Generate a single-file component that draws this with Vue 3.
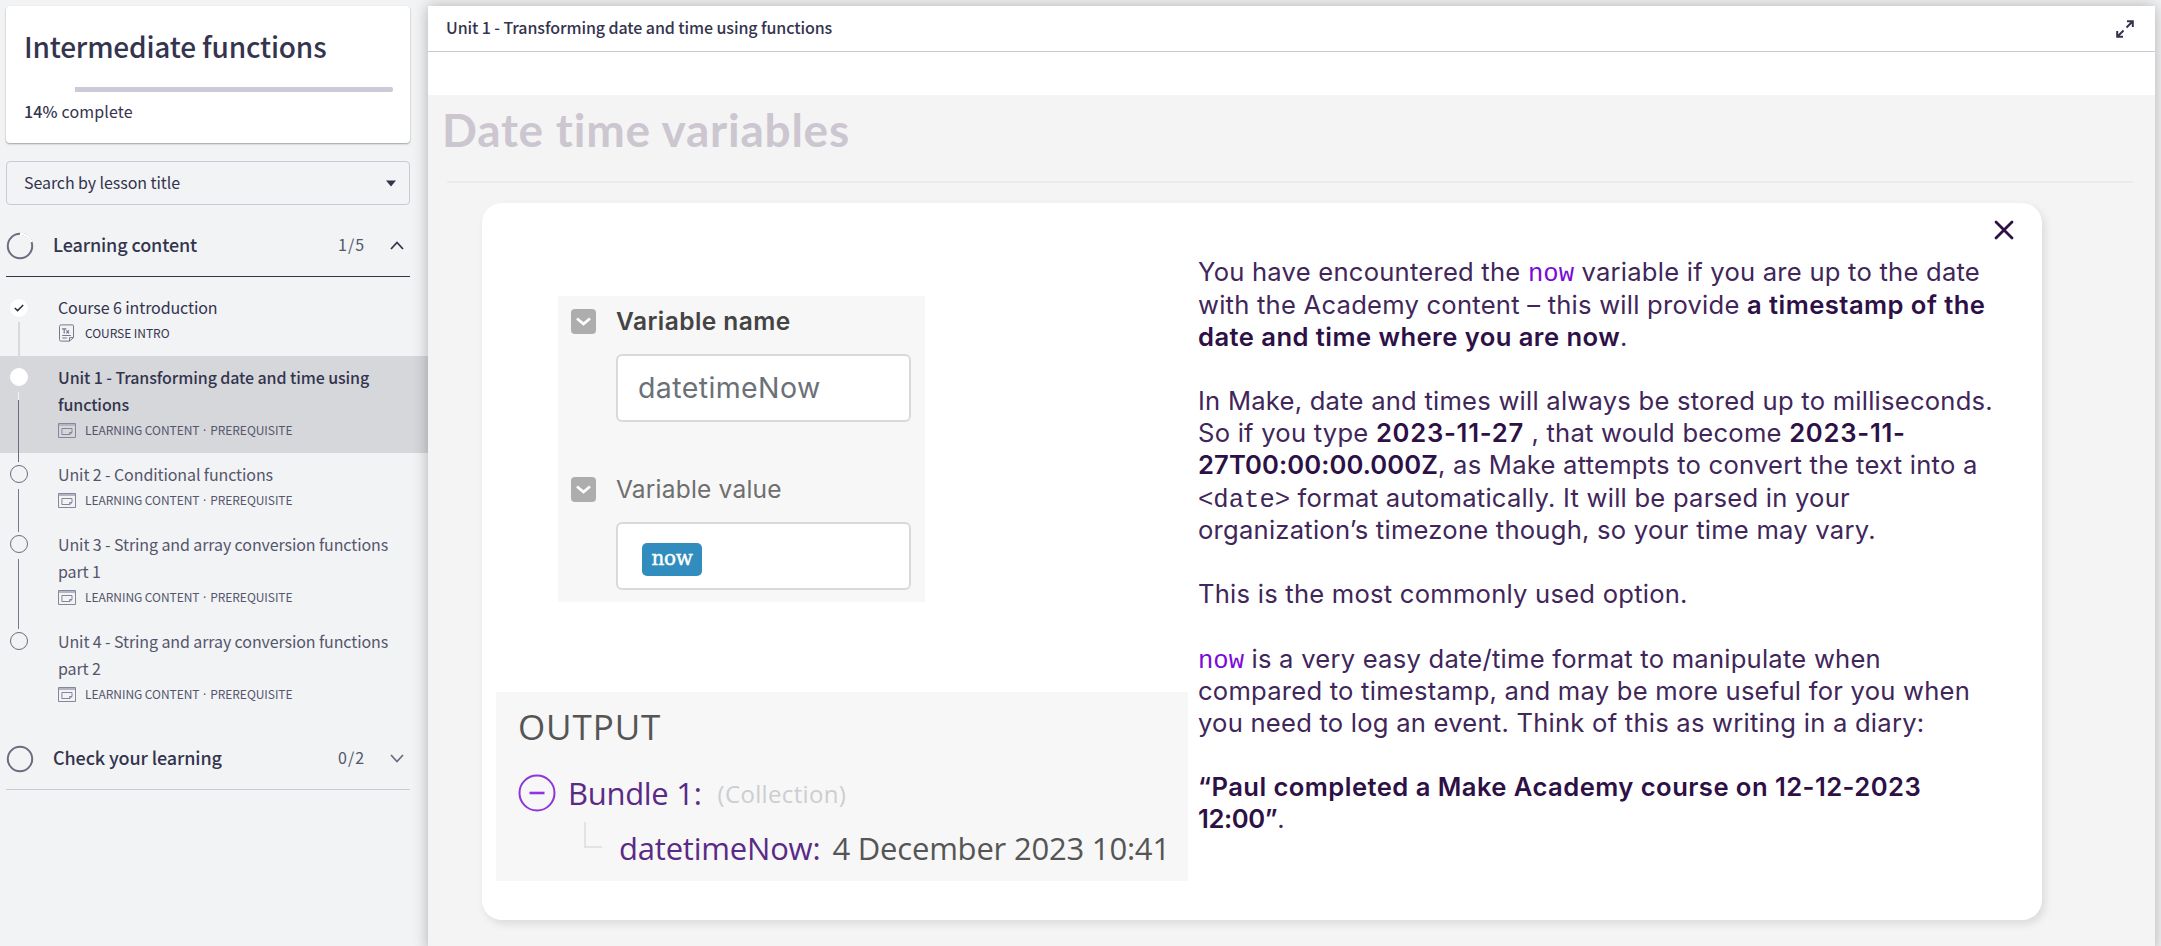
<script setup>
const units = [
  { lines: ['Course 6 introduction'], meta: ['COURSE INTRO'], state: 'done', icon: 'doc' },
  { lines: ['Unit 1 - Transforming date and time using', 'functions'], meta: ['LEARNING CONTENT', 'PREREQUISITE'], state: 'current', icon: 'win' },
  { lines: ['Unit 2 - Conditional functions'], meta: ['LEARNING CONTENT', 'PREREQUISITE'], state: 'todo', icon: 'win' },
  { lines: ['Unit 3 - String and array conversion functions', 'part 1'], meta: ['LEARNING CONTENT', 'PREREQUISITE'], state: 'todo', icon: 'win' },
  { lines: ['Unit 4 - String and array conversion functions', 'part 2'], meta: ['LEARNING CONTENT', 'PREREQUISITE'], state: 'todo', icon: 'win' },
]
</script>

<template>
  <div class="page">
    <aside class="side">
      <section class="progress-card">
        <h1>Intermediate functions</h1>
        <div class="bar"><i></i></div>
        <p><b>14%</b> complete</p>
      </section>
      <div class="select">
        <span>Search by lesson title</span>
        <svg width="10" height="7" viewBox="0 0 10 7"><path d="M0 0.5H10L5 6.5Z" fill="#34344e" /></svg>
      </div>
      <div class="section open">
        <svg class="ring" width="28" height="28" viewBox="0 0 28 28">
          <circle cx="14" cy="14" r="12.2" fill="none" stroke="#6b6c80" stroke-width="2" />
          <path d="M14 1.8A12.2 12.2 0 0 1 25.6 10.2" fill="none" stroke="#fff" stroke-width="2.4" />
        </svg>
        <h2>Learning content</h2>
        <em>1/5</em>
        <svg width="14" height="9" viewBox="0 0 14 9"><path d="M1 8L7 1.5L13 8" fill="none" stroke="#34344e" stroke-width="1.8" /></svg>
      </div>
      <ul>
        <li v-for="(u, i) in units" :key="i" :class="u.state">
          <div class="mark">
            <span class="dot"><svg v-if="u.state === 'done'" width="10" height="8" viewBox="0 0 10 8"><path d="M0.8 4L3.6 6.6L9.2 1" fill="none" stroke="#2b2b3d" stroke-width="1.5" /></svg></span>
            <span v-if="i < units.length - 1" class="line"></span>
          </div>
          <div class="info">
            <div v-for="l in u.lines" :key="l" class="ttl">{{ l }}</div>
            <div class="meta">
              <svg v-if="u.icon === 'doc'" width="18" height="18" viewBox="0 0 18 18" fill="none" stroke="#77788b"><path d="M3.2 0.9H14.4Q15.5 0.9 15.5 2V13.6L11.5 17.1H3.2Q1.5 17.1 1.5 15.5V2.4Q1.5 0.9 3.2 0.9ZM11.5 17V13.6H15.4M4.2 11.5H12.8M4.2 14H9" /><path d="M4 4.8H8.4M6.2 4.8V9.4M8.4 6.4L11 9.4M11 6.4L8.4 9.4" stroke-width="1.2" /></svg>
              <svg v-else width="18" height="15" viewBox="0 0 18 15" fill="none" stroke="#85869a"><path d="M0.5 0.5H17.5V14.5H0.5Z" /><path d="M1 2H17" stroke="#b4b5c2" stroke-width="2" /><path d="M3.9 5.5H14V9.6L11.8 11.5H3.9ZM11.6 11.4V9.5H14" /></svg>
              <span>{{ u.meta[0] }}<template v-if="u.meta[1]"><span class="sep"> · </span>{{ u.meta[1] }}</template></span>
            </div>
          </div>
        </li>
      </ul>
      <div class="section closed">
        <svg class="ring" width="28" height="28" viewBox="0 0 28 28"><circle cx="14" cy="14" r="12.2" fill="none" stroke="#6b6c80" stroke-width="2" /></svg>
        <h2>Check your learning</h2>
        <em>0/2</em>
        <svg width="14" height="9" viewBox="0 0 14 9"><path d="M1 1L7 7.5L13 1" fill="none" stroke="#6b6c80" stroke-width="1.8" /></svg>
      </div>
    </aside>

    <main>
      <header>
        <span>Unit 1 - Transforming date and time using functions</span>
        <svg width="18" height="18" viewBox="0 0 18 18" fill="none" stroke="#34344e" stroke-width="2"><path d="M10.5 7.5L16.5 1.5M11 1.2H16.8V7M7.5 10.5L1.5 16.5M1.2 11V16.8H7" /></svg>
      </header>
      <div class="content">
        <h3><span>Date time variables</span></h3>
        <div class="card">
          <div class="figs">
            <div class="vars">
              <div class="vrow"><span class="chk"><svg width="15" height="9" viewBox="0 0 15 9"><path d="M1 1.5L7.5 7L14 1.5" fill="none" stroke="#fff" stroke-width="2.8" /></svg></span><b>Variable name</b></div>
              <div class="field">datetimeNow</div>
              <div class="vrow second"><span class="chk"><svg width="15" height="9" viewBox="0 0 15 9"><path d="M1 1.5L7.5 7L14 1.5" fill="none" stroke="#fff" stroke-width="2.8" /></svg></span><span>Variable value</span></div>
              <div class="field"><span class="chip">now</span></div>
            </div>
            <div class="output">
              <div class="o1">OUTPUT</div>
              <div class="o2">
                <svg width="38" height="38" viewBox="0 0 38 38" fill="none" stroke="#8f35dc" stroke-width="2"><circle cx="19" cy="19" r="17.5" /><path d="M11.5 19H26.5" stroke-width="2.6" /></svg>
                <span class="bundle">Bundle 1:</span><span class="coll">(Collection)</span>
              </div>
              <div class="o3"><i></i><span class="key">datetimeNow:</span><span class="val">4 December 2023 10:41</span></div>
            </div>
          </div>
          <div class="copy">
            <svg class="close" width="20" height="20" viewBox="0 0 20 20"><path d="M2 2L18 18M18 2L2 18" stroke="#2d1046" stroke-width="2.8" stroke-linecap="round" /></svg>
            <div class="text">
              <p class="after">You have encountered the <code class="now">now</code> variable if you are up to the date</p>
              <p>with the Academy content – this will provide <b>a timestamp of the</b></p>
              <p><b>date and time where you are now</b>.</p>
              <p>&nbsp;</p>
              <p>In Make, date and times will always be stored up to milliseconds.</p>
              <p>So if you type <b class="wide">2023-11-27</b> , that would become <b class="wide">2023-11-</b></p>
              <p><b class="mid">27T00:00:00.000Z</b>, as Make attempts to convert the text into a</p>
              <p class="before"><code>&lt;date&gt;</code> format automatically. It will be parsed in your</p>
              <p>organization’s timezone though, so your time may vary.</p>
              <p>&nbsp;</p>
              <p>This is the most commonly used option.</p>
              <p>&nbsp;</p>
              <p class="before"><code class="now">now</code> is a very easy date/time format to manipulate when</p>
              <p>compared to timestamp, and may be more useful for you when</p>
              <p>you need to log an event. Think of this as writing in a diary:</p>
              <p>&nbsp;</p>
              <p><b>“Paul completed a Make Academy course on 12-12-2023</b></p>
              <p><b class="tight">12:00”</b>.</p>
            </div>
          </div>
        </div>
      </div>
    </main>
  </div>
</template>

<style>
body { margin: 0; background: #f1f3f5; overflow: hidden; }
</style>
<style scoped>
* { box-sizing: border-box; }
.page { display: flex; width: 2161px; height: 946px; overflow: hidden; background: #f1f3f5; color: #34344e; font-family: "Noto Sans CJK SC", "Noto Sans", sans-serif; white-space: nowrap; }
h1, h2, h3, p, ul { margin: 0; padding: 0; font-weight: 400; }
.side { width: 428px; flex: none; padding-top: 6px; }
.progress-card { width: 404px; height: 137px; margin-left: 6px; background: #fff; border-radius: 4px; box-shadow: 0 1px 2px rgba(0, 0, 0, .35); padding: 20px 17px 0 18px; }
h1 { font-size: 28px; line-height: 40px; font-weight: 500; letter-spacing: -.18px; }
.bar { height: 5px; margin-top: 21px; display: flex; justify-content: flex-end; }
.bar i { width: 318px; height: 5px; background: #cacbd7; border-radius: 0 2px 2px 0; }
.progress-card p { font-size: 16px; line-height: 24px; margin-top: 7px; letter-spacing: .15px; }
.progress-card b { font-weight: 500; }
.select { width: 404px; height: 44px; margin: 18px 0 0 6px; border: 1px solid #c9cad6; border-radius: 4px; padding: 0 13px 0 17px; display: flex; align-items: center; justify-content: space-between; font-size: 16px; line-height: 24px; letter-spacing: -.08px; }
.select span { margin-top: -3px; }
.section { width: 404px; margin-left: 6px; display: flex; align-items: center; height: 62px; padding-right: 6px; }
.open { margin-top: 10px; border-bottom: 1px solid #34344e; }
.closed { margin-top: 11px; border-bottom: 1px solid #c9cad6; }
.ring { margin-right: 19px; }
h2 { flex: 1; font-size: 18px; line-height: 26px; font-weight: 500; letter-spacing: -.12px; margin-top: -3px; }
em { font-style: normal; font-size: 16px; color: #55566c; margin: -3px 25px 0 0; letter-spacing: .95px; }
ul { list-style: none; margin-top: 9px; }
li { display: flex; padding-bottom: 13px; }
.mark { width: 58px; flex: none; position: relative; padding: 12px 0 0 10px; }
.done .mark { padding-top: 13px; }
.dot { display: flex; align-items: center; justify-content: center; width: 18px; height: 18px; border-radius: 50%; border: 1px solid #6b6c80; }
.done .dot, .current .dot { background: #fff; border-color: #fff; }
.line { position: absolute; left: 18px; top: 36px; bottom: -22px; width: 1px; background: #77788b; }
.done .line { background: #d8d9dd; width: 2px; }
.current .line { background: linear-gradient(#f1f3f5 8px, #6b6c80 8px); }
.info { padding-top: 8px; }
.ttl { font-size: 16px; line-height: 27px; letter-spacing: -.1px; }
.meta { display: flex; align-items: center; gap: 9px; height: 20px; margin-top: 2px; font-size: 12px; line-height: 20px; letter-spacing: -.05px; }
.sep { font-family: "Noto Sans", sans-serif; letter-spacing: .4px; }
.todo .ttl, .todo .meta, .current .meta { color: #55566c; }
.current { background: #d6d7db; }
.current .ttl { font-weight: 500; }
main { width: 1727px; height: 946px; margin-top: 6px; background: #fff; box-shadow: 0 0 14px rgba(0, 0, 0, .28); }
header { height: 46px; border-bottom: 1px solid #c9cad0; display: flex; align-items: center; justify-content: space-between; padding: 0 21px 0 18px; font-size: 16px; font-weight: 500; letter-spacing: -.09px; }
header span { margin-top: -3px; }
.content { margin-top: 43px; height: 851px; background: #f4f4f4; padding: 0 22px 0 19px; }
h3 { height: 88px; border-bottom: 2px solid #ebebeb; font: 700 46px/70px Lato, sans-serif; letter-spacing: .75px; color: #ccc6d0; margin-bottom: 20px; }
h3 span { margin-left: -5px; }
.card { width: 1560px; height: 717px; margin-left: 35px; background: #fff; border-radius: 20px; box-shadow: 3px 4px 8px rgba(0, 0, 0, .1); display: flex; }
.figs { width: 707px; flex: none; padding: 93px 0 0 14px; }
.vars { width: 367px; height: 306px; margin-left: 62px; background: #f7f7f7; padding: 12px 14px 0 13px; font: 400 24.5px/26px Inter, sans-serif; color: #6f6f6f; letter-spacing: .2px; }
.vrow { display: flex; align-items: center; gap: 20px; height: 26px; }
.vrow b { font-weight: 600; color: #444; letter-spacing: .45px; }
.second { margin-top: 54px; }
.chk { width: 25px; height: 25px; border-radius: 4px; background: #adadad; display: flex; align-items: center; justify-content: center; }
.field { height: 68px; margin: 20px 0 0 45px; border: 2px solid #d9d9d9; border-radius: 6px; background: #fff; padding-left: 20px; display: flex; align-items: center; font-size: 28.5px; letter-spacing: .4px; color: #6a7177; }
.second + .field { padding-left: 24px; }
.chip { width: 60px; height: 33px; margin-top: 6px; border-radius: 5px; background: #318dbd; color: #fff; display: flex; align-items: center; justify-content: center; font: 400 20px/30px "DejaVu Serif", serif; letter-spacing: -.3px; -webkit-text-stroke: .4px #fff; padding-bottom: 3px; }
.output { width: 692px; height: 189px; margin-top: 90px; background: #f7f7f7; padding: 12px 0 0 22px; font-family: "Open Sans", sans-serif; }
.o1 { font-size: 35px; line-height: 46px; color: #555; letter-spacing: .9px; }
.o2 { display: flex; align-items: center; height: 38px; margin-top: 24px; font-size: 31px; letter-spacing: -.3px; }
.bundle { color: #5a2a86; margin-left: 12px; }
.coll { color: #ccced0; font-size: 24px; font-weight: 500; margin-left: 16px; letter-spacing: .35px; }
.o3 { display: flex; align-items: center; height: 50px; margin-top: 11px; font-size: 31px; letter-spacing: -.2px; }
.o3 i { width: 18px; height: 26px; border: solid #e2e3e6; border-width: 0 0 2px 2px; margin: -26px 17px 0 66px; }
.key { color: #5a2a86; }
.val { color: #555; margin-left: 12px; }
.copy { position: relative; padding: 53px 0 0 9px; }
.close { position: absolute; left: 805px; top: 17px; }
.text { font: 300 25.6px/32px Inter, sans-serif; letter-spacing: .23px; color: #402659; }
.text p { height: 32px; }
.text .after { margin-bottom: 1px; }
.text .before { margin-top: 1px; }
.text b { font-weight: 600; letter-spacing: .45px; color: #2d1046; }
.text .wide { letter-spacing: .75px; }
.text .mid { letter-spacing: .1px; }
.text .tight { letter-spacing: -.4px; }
code { font: 400 25.6px/20px "Liberation Mono", monospace; letter-spacing: 0; }
.now { color: #7a0bd8; }
</style>
